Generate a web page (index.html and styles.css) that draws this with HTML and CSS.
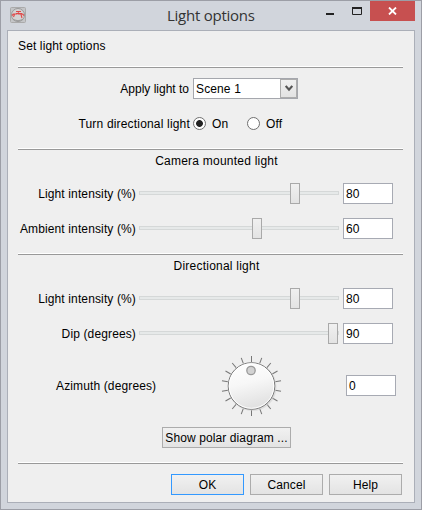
FILE: index.html
```html
<!DOCTYPE html>
<html lang="en">
<head>
<meta charset="utf-8">
<title>Light options</title>
<link rel="stylesheet" href="styles.css">
</head>
<body>
<div class="window">
  <header class="titlebar">
    <svg class="app-icon" width="16" height="16" viewBox="0 0 16 16">
      <rect x=".5" y=".5" width="15" height="15" rx="1" fill="#c4c5c7" stroke="#aaa"/>
      <circle cx="8" cy="8" r="6.5" fill="#d4d3d3" stroke="#999"/>
      <path d="M3 12.5Q8 15 13 12.5" fill="none" stroke="#999"/>
      <path d="M2 8.5L3.5 7H7L9 5.5M6 4.5h5M8 7h4.5L14 8.5M4.5 7.5L3.5 10M11 7.5l1 3.5M6 6.5h6" fill="none" stroke="#e04848" stroke-width="1.1"/>
    </svg>
    <h1 class="title">Light options</h1>
    <svg class="controls" width="56" height="20" viewBox="0 0 56 20">
      <path d="M12 12h8v2h-8z" fill="#222"/>
      <path d="M38.5 6.5h9v7h-9z" fill="none" stroke="#222"/>
      <path d="M38 6h10v2H38z" fill="#222"/>
    </svg>
    <div class="close"><svg width="9" height="8" viewBox="0 0 9 8"><path d="M1 .5l7 7M8 .5l-7 7" stroke="#fff" stroke-width="1.8"/></svg></div>
  </header>
  <main class="panel">
    <p class="intro">Set light options</p>
    <hr>
    <div class="row scene">
      <label>Apply light to</label>
      <div class="combo"><span>Scene 1</span><i class="arrow"><svg width="8" height="7" viewBox="0 0 8 7"><path d="M.7 1L4 4.7 7.3 1" fill="none" stroke="#555" stroke-width="2.2"/></svg></i></div>
    </div>
    <div class="row toggle">
      <label>Turn directional light</label>
      <div class="radios">
        <span class="radio checked"></span><span class="on">On</span>
        <span class="radio"></span><span>Off</span>
      </div>
    </div>
    <hr>
    <h2>Camera mounted light</h2>
    <div class="row slide"><label>Light intensity (%)</label><div class="slider"><i class="thumb" style="margin-left:151px"></i></div><div class="field">80</div></div>
    <div class="row slide"><label>Ambient intensity (%)</label><div class="slider"><i class="thumb" style="margin-left:113px"></i></div><div class="field">60</div></div>
    <hr>
    <h2>Directional light</h2>
    <div class="row slide"><label>Light intensity (%)</label><div class="slider"><i class="thumb" style="margin-left:151px"></i></div><div class="field">80</div></div>
    <div class="row slide"><label>Dip (degrees)</label><div class="slider"><i class="thumb" style="margin-left:189px"></i></div><div class="field">90</div></div>
    <div class="azimuth">
      <label>Azimuth (degrees)</label>
      <svg class="dial" width="64" height="64" viewBox="-32.5 -32 64 64">
        <defs>
          <linearGradient id="face" x1="0" y1="0" x2=".25" y2="1"><stop offset="0" stop-color="#fff"/><stop offset=".5" stop-color="#f7f7f7"/><stop offset="1" stop-color="#e2e2e2"/></linearGradient>
        </defs>
        <g stroke="#777" stroke-width="1">
          <path d="M0-24V-30" id="tick"/>
          <use href="#tick" transform="rotate(20)"/><use href="#tick" transform="rotate(40)"/><use href="#tick" transform="rotate(60)"/>
          <use href="#tick" transform="rotate(80)"/><use href="#tick" transform="rotate(100)"/><use href="#tick" transform="rotate(120)"/>
          <use href="#tick" transform="rotate(140)"/><use href="#tick" transform="rotate(160)"/><use href="#tick" transform="rotate(180)"/>
          <use href="#tick" transform="rotate(200)"/><use href="#tick" transform="rotate(220)"/><use href="#tick" transform="rotate(240)"/>
          <use href="#tick" transform="rotate(260)"/><use href="#tick" transform="rotate(280)"/><use href="#tick" transform="rotate(300)"/>
          <use href="#tick" transform="rotate(320)"/><use href="#tick" transform="rotate(340)"/>
        </g>
        <circle cx="1" cy="1" r="24" fill="#ccc" opacity=".5"/>
        <circle r="23.3" fill="url(#face)" stroke="#777"/>
        <circle r="22.3" fill="none" stroke="#fff"/>
        <circle cx="-.5" cy="-15.5" r="4.2" fill="#d2d2d2" stroke="#999" stroke-width="1.3"/>
      </svg>
      <div class="field">0</div>
    </div>
    <button class="btn polar">Show polar diagram ...</button>
    <hr>
    <footer class="actions"><button class="btn primary">OK</button><button class="btn">Cancel</button><button class="btn">Help</button></footer>
  </main>
</div>
</body>
</html>
```
FILE: styles.css
```css
* { box-sizing: border-box; }
body { margin: 0; font: 12px/14px "Liberation Sans", Arial, sans-serif; letter-spacing: .13px; color: #000; }
.window { width: 422px; height: 510px; background: #d1d5dc; border: 1px solid #9c9ea6; padding: 0 6px; }
.titlebar { height: 29px; display: grid; grid-template-columns: 160px 1fr 56px 45px; }
.app-icon { margin: 6px 0 0 3px; }
.title { margin: 4px 0 0; font: 400 15px/20px "Open Sans", "Noto Sans", sans-serif; color: #333; letter-spacing: -.25px; white-space: nowrap; }
.close { width: 45px; height: 20px; background: #c75050; display: flex; align-items: center; justify-content: center; }
.panel { height: 473px; background: #efefef; border: 1px solid #abafb8; padding: 0 10px; white-space: nowrap; }
.intro { margin: 0; padding-top: 8px; height: 35px; }
hr { height: 2px; width: 385px; margin: 0; border: 0; border-top: 1px solid #fff; border-bottom: 1px solid #999; }
.row { display: grid; align-items: center; height: 21px; }
.row label { justify-self: end; }
.scene, .toggle { grid-template-columns: 172px 105px; column-gap: 3px; }
.scene { margin-top: 10px; }
.scene label { letter-spacing: 0; padding-right: 1px; }
.toggle { margin: 14px 0; }
.toggle label { letter-spacing: .18px; }
.combo { height: 21px; border: 1px solid #a5a7ad; background: #fff; display: flex; align-items: center; justify-content: space-between; padding-left: 2px; }
.arrow { width: 17px; height: 19px; border: 1px solid #adadad; background: linear-gradient(#f0f0f0, #e3e3e3); display: flex; align-items: center; justify-content: center; }
.radios { display: flex; align-items: center; }
.radio { width: 13px; height: 13px; border: 1px solid #707070; border-radius: 50%; background: #fff; margin-right: 6px; flex: none; }
.checked { background: radial-gradient(circle, #222 0 3px, #fff 3.8px); }
.on { width: 35px; }
h2 { margin: 0; font: inherit; letter-spacing: .23px; height: 33px; padding-top: 4px; width: 397px; text-align: center; }
.slide { grid-template-columns: 118px 200px 50px; column-gap: 3px; margin-bottom: 14px; }
.slide .field { margin-left: 1px; }
.slider { height: 21px; background: linear-gradient(#d5d8d8, #d5d8d8) 0 8px / 200px 4px no-repeat; position: relative; }
.slider::before { content: ""; position: absolute; left: 1px; top: 9px; width: 198px; height: 2px; background: #e6e9e9; }
.thumb { display: block; position: relative; width: 10px; height: 21px; border: 1px solid #a9a9a9; background: linear-gradient(#f0f0f0, #e3e3e3); }
.field { width: 50px; height: 21px; border: 1px solid #a7aab3; background: #fff; padding: 3px 2px; }
.azimuth { height: 64px; margin-top: -4px; display: grid; grid-template-columns: 201px 127px 50px; align-items: center; }
.azimuth label { padding-left: 38px; }
.azimuth .field { margin-bottom: 1px; }
.btn { height: 21px; border: 1px solid #acacac; background: linear-gradient(#f1f1f1, #e3e3e3); padding: 0; font: inherit; letter-spacing: .1px; color: inherit; white-space: nowrap; }
.polar { display: block; width: 129px; margin: 9px 0 14px 144px; }
.actions { display: flex; gap: 6px; margin: 10px 0 0 153px; }
.actions .btn { width: 73px; }
.actions .primary { border: 1px solid #3399ff; }
```
